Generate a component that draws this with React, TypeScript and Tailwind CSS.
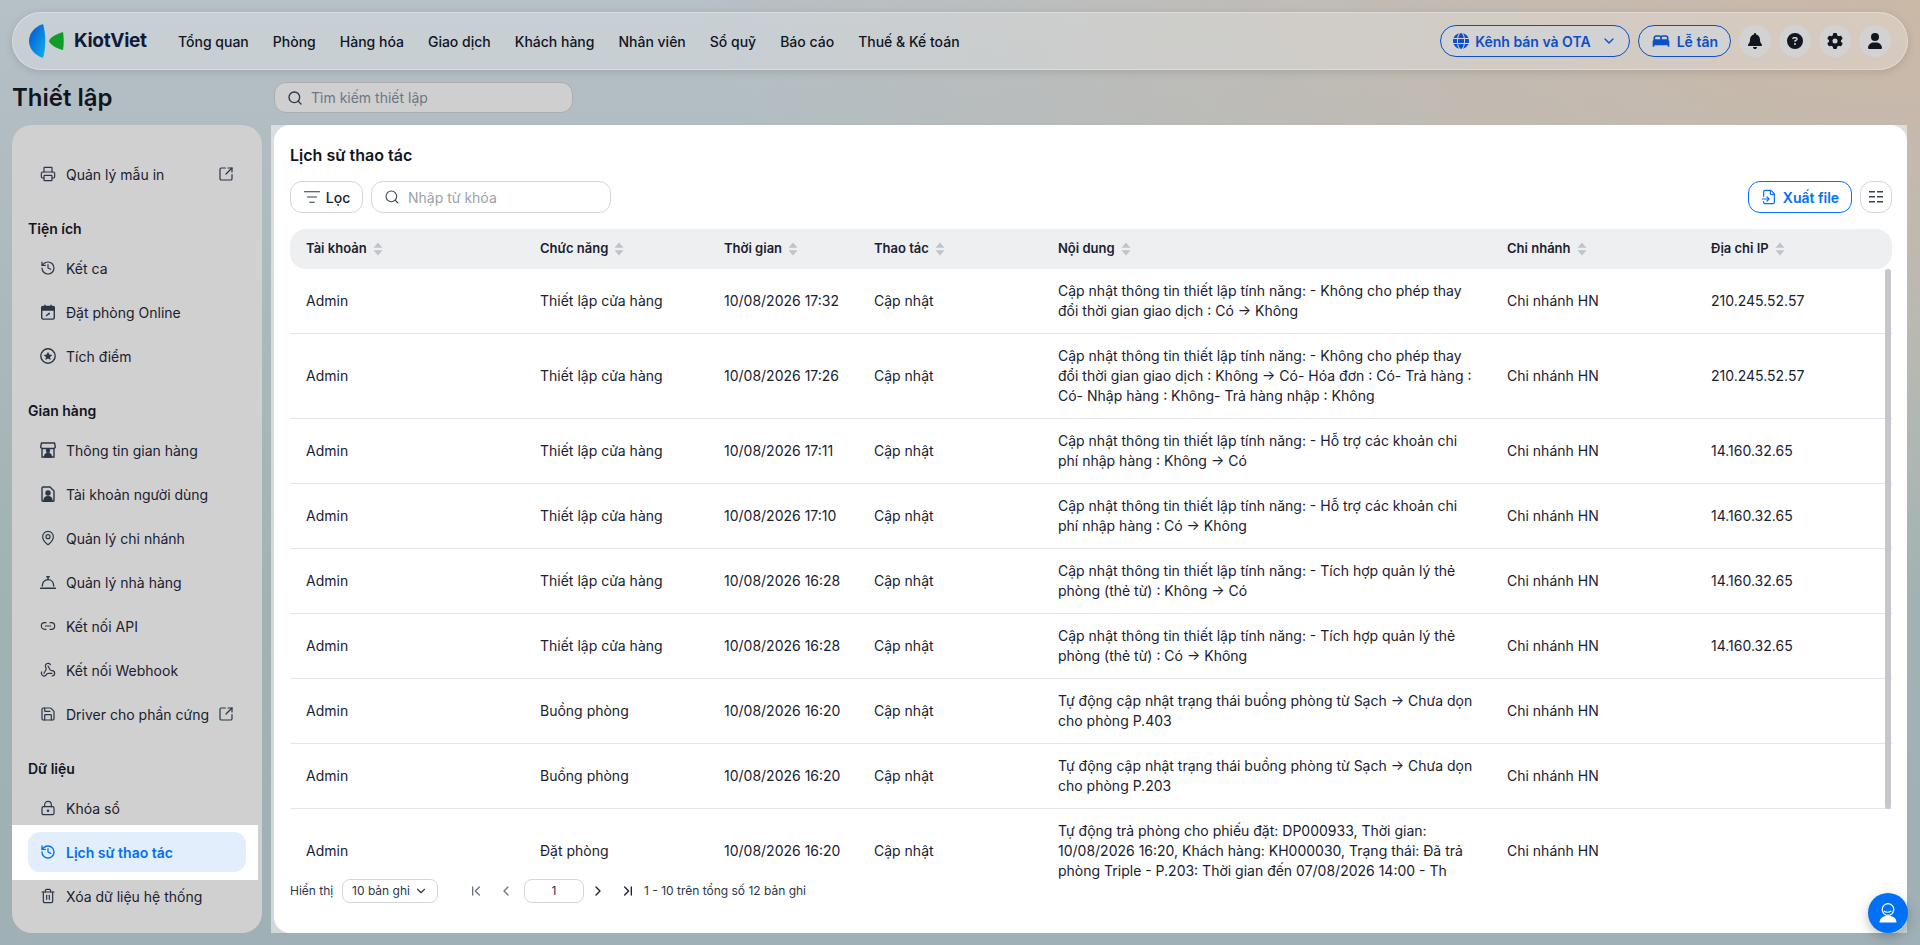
import React from "react";
import { Printer, History, MapPin, Link2, Webhook, Save, LockKeyhole, Trash2, SquareArrowOutUpRight, Search, ListFilter, FileInput, ChevronDown, ChevronFirst, ChevronLast, ChevronLeft, ChevronRight } from "lucide-react";
import { FaBell, FaCircleQuestion, FaUser, FaGear, FaGlobe } from "react-icons/fa6";
import { MdBed } from "react-icons/md";

const Logo = () => (
  <svg width="35" height="34" viewBox="0 0 35 34">
    <defs>
      <linearGradient id="lb" x1="0" y1="0" x2="1" y2="1">
        <stop offset="0" stopColor="#0a4fd0" />
        <stop offset="0.6" stopColor="#0a8be0" />
        <stop offset="1" stopColor="#14b0e8" />
      </linearGradient>
    </defs>
    <path d="M14 0C5 3 0 10 0 17s5 14 14 17C17 25 17 9 14 0Z" fill="url(#lb)" />
    <path d="M34 8c-5 1.500-13 5-14 9 1 4 9 8 14 9 1-6 1-12 0-18Z" fill="#0f9d2a" />
  </svg>
);

const CalIcon = () => (
  <svg width="16" height="16" viewBox="0 0 16 16" fill="none" stroke="#2b3648" strokeWidth="1.4">
    <rect x="1.700" y="2.500" width="12.600" height="12.600" rx="1.500" />
    <path d="M1.700 3.500h12.600V6H1.700z" fill="#2b3648" />
    <path d="M5 .7v2M11 .7v2" />
    <path d="M6 12l3.500-3" />
    <path d="M9.800 8.500v2h-2z" fill="#2b3648" stroke="none" />
  </svg>
);
const StarIcon = () => (
  <svg width="16" height="16" viewBox="0 0 16 16" fill="none">
    <circle cx="8" cy="8" r="7.200" stroke="#2b3648" strokeWidth="1.400" />
    <path d="M8 3.800l1.300 2.800 3 .3-2.250 2 .65 3L8 10.400 5.300 11.900l.65-3-2.250-2 3-.3z" fill="#2b3648" />
  </svg>
);
const StoreIcon = () => (
  <svg width="16" height="16" viewBox="0 0 16 16" fill="none" stroke="#2b3648" strokeWidth="1.400">
    <path d="M1.500 1h13l.8 3.500c0 1.200-1 2-2.200 2H2.900c-1.200 0-2.200-.8-2.200-2z" />
    <path d="M2 6.500V15h12V6.500" />
    <circle cx="8" cy="8.800" r="1.500" fill="#2b3648" />
    <path d="M4.700 15c0-2.500 1.500-3.500 3.300-3.500s3.300 1 3.300 3.500z" fill="#2b3648" />
  </svg>
);
const AccountIcon = () => (
  <svg width="16" height="16" viewBox="0 0 16 16" fill="none" stroke="#2b3648" strokeWidth="1.400">
    <path d="M2 2c0-.6.400-1 1-1h7l4 4v9.500c0 .4-.400.800-1 .800H3c-.6 0-1-.4-1-1z" />
    <circle cx="8" cy="7" r="2" fill="#2b3648" />
    <path d="M4 15c0-3 1.800-4.300 4-4.300s4 1.300 4 4.300z" fill="#2b3648" />
  </svg>
);
const BellDome = () => (
  <svg width="16" height="16" viewBox="0 0 16 16" fill="none" stroke="#2b3648" strokeWidth="1.400" strokeLinecap="round">
    <path d="M2.300 12c0-3.800 2.500-6.400 5.700-6.400s5.700 2.600 5.700 6.400" />
    <path d="M.5 14.200h15M8 5.500V3M6.800 2.800h2.400" />
  </svg>
);

const SortIcon = () => (
  <svg width="10" height="14" viewBox="0 0 10 14" className="ml-1.5 shrink-0" fill="#bfc3ca">
    <path d="M5 .5 9.500 5.700H.5zM5 13.500.5 8.300h9z" />
  </svg>
);

const ColumnsIcon = () => (
  <svg width="16" height="12" viewBox="0 0 16 12" fill="#3a4353">
    <path d="M1 0h6v1.500H1zM9 0h6v1.500H9zM1 5h6v1.500H1zM9 5h6v1.500H9zM1 10h6v1.500H1zM9 10h6v1.500H9z" />
  </svg>
);

const SupportIcon = () => (
  <svg width="24" height="24" viewBox="0 0 24 24" fill="none">
    <circle cx="12" cy="8.500" r="5.800" stroke="#fff" strokeWidth="1.200" />
    <path d="M8 10c1.500 1.500 5 1.800 7.500 0" stroke="#fff" strokeWidth="1.200" />
    <path d="M3.500 21.500c0-4.500 3.500-6.800 8.500-6.800s8.500 2.300 8.500 6.800z" fill="#fff" />
  </svg>
);

const nav = ["Tổng quan", "Phòng", "Hàng hóa", "Giao dịch", "Khách hàng", "Nhân viên", "Sổ quỹ", "Báo cáo", "Thuế & Kế toán"];

const ic = { size: 16, color: "#2b3648", strokeWidth: 1.8 };

type Item = { label: string; icon: React.ReactNode; ext?: boolean; active?: boolean };

const Row = ({ label, icon, ext }: Item) => (
  <div className="flex h-11 items-center pl-7 pr-7">
    <span className="flex w-4 justify-center mr-2.5 shrink-0">{icon}</span>
    <span className="flex-1 whitespace-nowrap text-[14px] text-[#1a2130]">{label}</span>
    {ext && <SquareArrowOutUpRight size={16} color="#2b3648" strokeWidth={1.8} />}
  </div>
);

const Title = ({ children }: { children: React.ReactNode }) => (
  <div className="flex h-5 items-center pl-4 text-[14px] font-semibold text-[#11151f]">{children}</div>
);

const cols = ["Tài khoản", "Chức năng", "Thời gian", "Thao tác", "Nội dung", "Chi nhánh", "Địa chỉ IP"];
const gridCols = "grid grid-cols-[234px_184px_150px_184px_449px_204px_181px]";

const rows = [
  ["Thiết lập cửa hàng", "10/08/2026 17:32", "Cập nhật thông tin thiết lập tính năng: - Không cho phép thay đổi thời gian giao dịch : Có -> Không", "210.245.52.57"],
  ["Thiết lập cửa hàng", "10/08/2026 17:26", "Cập nhật thông tin thiết lập tính năng: - Không cho phép thay đổi thời gian giao dịch : Không -> Có- Hóa đơn : Có- Trả hàng : Có- Nhập hàng : Không- Trả hàng nhập : Không", "210.245.52.57"],
  ["Thiết lập cửa hàng", "10/08/2026 17:11", "Cập nhật thông tin thiết lập tính năng: - Hỗ trợ các khoản chi phí nhập hàng : Không -> Có", "14.160.32.65"],
  ["Thiết lập cửa hàng", "10/08/2026 17:10", "Cập nhật thông tin thiết lập tính năng: - Hỗ trợ các khoản chi phí nhập hàng : Có -> Không", "14.160.32.65"],
  ["Thiết lập cửa hàng", "10/08/2026 16:28", "Cập nhật thông tin thiết lập tính năng: - Tích hợp quản lý thẻ phòng (thẻ từ) : Không -> Có", "14.160.32.65"],
  ["Thiết lập cửa hàng", "10/08/2026 16:28", "Cập nhật thông tin thiết lập tính năng: - Tích hợp quản lý thẻ phòng (thẻ từ) : Có -> Không", "14.160.32.65"],
  ["Buồng phòng", "10/08/2026 16:20", "Tự động cập nhật trạng thái buồng phòng từ Sạch → Chưa dọn cho phòng P.403", ""],
  ["Buồng phòng", "10/08/2026 16:20", "Tự động cập nhật trạng thái buồng phòng từ Sạch → Chưa dọn cho phòng P.203", ""],
  ["Đặt phòng", "10/08/2026 16:20", "Tự động trả phòng cho phiếu đặt: DP000933, Thời gian: 10/08/2026 16:20, Khách hàng: KH000030, Trạng thái: Đã trả phòng Triple - P.203: Thời gian đến 07/08/2026 14:00 - Th", ""],
];

export default function App() {
  return (
    <div className="relative flex h-[945px] w-[1920px] flex-col overflow-hidden bg-[radial-gradient(ellipse_at_100%_0%,#cbb8a6_0%,rgba(203,184,166,0)_45%),linear-gradient(180deg,#b6c0c7_0%,#a0b2b1_65%,#9fb1b6_100%)] px-3 pt-3 font-['Inter','Noto_Sans',sans-serif] text-[#1a2130]">
      <header className="flex h-[58px] shrink-0 items-center rounded-[29px] border border-white/30 bg-white/25 pl-[16px] pr-[16px] shadow-[0_2px_8px_rgba(0,0,0,0.12)]">
        <Logo />
        <span className="ml-[10px] w-[76px] text-[19px] font-bold tracking-[-0.3px] text-[#101a3a]">KiotViet</span>
        <nav className="ml-[28px] flex gap-6">
          {nav.map((n) => (
            <span key={n} className="whitespace-nowrap text-[14px] font-medium text-[#11151f]">{n}</span>
          ))}
        </nav>
        <div className="ml-auto flex items-center gap-2">
          <div className="flex h-8 items-center gap-[6px] rounded-full border border-[#0b50c8] bg-[#d2d2d2] pl-[12px] pr-[12px] text-[14px] font-semibold text-[#0b50c8]">
            <FaGlobe size={16} />
            <span>Kênh bán và OTA</span>
            <ChevronDown size={16} className="ml-1" />
          </div>
          <div className="flex h-8 items-center gap-[6px] rounded-full border border-[#0b50c8] bg-[#d2d2d2] pl-[12px] pr-[12px] text-[14px] font-semibold text-[#0b50c8]">
            <MdBed size={20} />
            <span>Lễ tân</span>
          </div>
          {[<FaBell size={16} />, <FaCircleQuestion size={16} />, <FaGear size={16} />, <FaUser size={16} />].map((i, k) => (
            <span key={k} className="flex h-8 w-8 items-center justify-center rounded-full bg-[#d2d2d2] text-[#11151f]">{i}</span>
          ))}
        </div>
      </header>

      <div className="mt-3 flex h-[31px] shrink-0 items-center">
        <h1 className="w-[262px] text-[24px] font-semibold text-[#11151f]">Thiết lập</h1>
        <div className="flex h-[31px] w-[299px] items-center gap-2 rounded-xl border border-[#a9adb0] bg-[#cfcfcf] px-3 text-[14px] text-[#6d7684]">
          <Search size={16} color="#2b3648" />
          <span>Tìm kiếm thiết lập</span>
        </div>
      </div>

      <div className="mt-[12px] flex h-[808px] shrink-0">
        <aside className="flex h-full w-[250px] shrink-0 flex-col rounded-[20px] bg-[#d0d0d0] pt-[27px]">
          <div className="-mx-0"><Row label="Quản lý mẫu in" icon={<Printer {...ic} />} ext /></div>
          <div className="mt-[22px]"><Title>Tiện ích</Title></div>
          <div className="mt-[8px]">
            <Row label="Kết ca" icon={<History {...ic} />} />
            <Row label="Đặt phòng Online" icon={<CalIcon />} />
            <Row label="Tích điểm" icon={<StarIcon />} />
          </div>
          <div className="mt-[22px]"><Title>Gian hàng</Title></div>
          <div className="mt-[8px]">
            <Row label="Thông tin gian hàng" icon={<StoreIcon />} />
            <Row label="Tài khoản người dùng" icon={<AccountIcon />} />
            <Row label="Quản lý chi nhánh" icon={<MapPin {...ic} />} />
            <Row label="Quản lý nhà hàng" icon={<BellDome />} />
            <Row label="Kết nối API" icon={<Link2 {...ic} />} />
            <Row label="Kết nối Webhook" icon={<Webhook {...ic} />} />
            <Row label="Driver cho phần cứng" icon={<Save {...ic} />} ext />
          </div>
          <div className="mt-[22px]"><Title>Dữ liệu</Title></div>
          <div className="mt-[8px]">
            <Row label="Khóa sổ" icon={<LockKeyhole {...ic} />} />
            <div className="h-[55px] w-[246px] -my-[5.5px] relative flex items-center bg-white pl-4">
              <div className="flex h-10 w-[218px] items-center rounded-xl bg-[#e2eefb] pl-3">
                <History size={16} color="#0070f4" strokeWidth={2} className="mr-2.5" />
                <span className="text-[14px] font-semibold text-[#0070f4]">Lịch sử thao tác</span>
              </div>
            </div>
            <Row label="Xóa dữ liệu hệ thống" icon={<Trash2 {...ic} />} />
          </div>
        </aside>

        <main className="ml-[9px] flex h-full w-[1636px] bg-white/50 pl-[3px]">
          <div className="flex h-full w-full flex-col overflow-hidden rounded-[16px] bg-white pl-4 pr-[15px]">
            <h2 className="mt-[19px] h-[22px] text-[16px] font-semibold leading-[22px] text-[#11151f]">Lịch sử thao tác</h2>
            <div className="mt-[15px] flex h-8 shrink-0 items-center">
              <div className="flex h-8 w-[73px] items-center justify-center gap-[5px] rounded-xl border border-[#d3d6da] text-[14px] font-medium">
                <ListFilter size={18} color="#2b3648" strokeWidth={1.6} />
                Lọc
              </div>
              <div className="ml-2 flex h-8 w-[240px] items-center gap-2 rounded-xl border border-[#d3d6da] px-3 text-[14px] text-[#9aa1ac]">
                <Search size={16} color="#3a4353" strokeWidth={1.6} />
                Nhập từ khóa
              </div>
              <div className="ml-auto flex h-8 w-[104px] items-center justify-center gap-[6px] rounded-xl border border-[#0070f4] text-[14px] font-semibold text-[#0070f4]">
                <FileInput size={16} strokeWidth={1.8} />
                Xuất file
              </div>
              <div className="ml-2 flex h-8 w-8 items-center justify-center rounded-xl border border-[#d3d6da]">
                <ColumnsIcon />
              </div>
            </div>

            <div className={`${gridCols} mt-4 h-10 shrink-0 items-center rounded-2xl bg-[#eeeff1]`}>
              {cols.map((c) => (
                <div key={c} className="flex items-center pl-4 text-[13px] font-semibold text-[#1a2130]">
                  {c}
                  <SortIcon />
                </div>
              ))}
            </div>

            <div className="relative h-[610px] shrink-0 overflow-hidden">
              {rows.map((r, i) => (
                <div key={i} className={`${gridCols} items-center border-b border-[#e4e6e9] py-3 text-[14px] leading-5 text-[#1a2130]`}>
                  <div className="pl-4">Admin</div>
                  <div className="pl-4">{r[0]}</div>
                  <div className="pl-4">{r[1]}</div>
                  <div className="pl-4">Cập nhật</div>
                  <div className="pl-4 pr-4">{r[2]}</div>
                  <div className="pl-4">Chi nhánh HN</div>
                  <div className="pl-4">{r[3]}</div>
                </div>
              ))}
              <div className="absolute right-[1px] top-0 h-[540px] w-[6px] rounded-full bg-[#c4c6cc]" />
            </div>

            <div className="flex h-[24px] shrink-0 items-center text-[12px] text-[#2b3648]">
              <span className="w-[52px]">Hiển thị</span>
              <div className="flex h-6 w-[96px] items-center justify-center gap-1 rounded-lg border border-[#d3d6da]">
                10 bản ghi
                <ChevronDown size={14} />
              </div>
              <ChevronFirst size={16} color="#6b7280" className="ml-[30px]" />
              <ChevronLeft size={16} color="#6b7280" className="ml-[14px]" />
              <div className="ml-[10px] flex h-6 w-[60px] items-center justify-center rounded-lg border border-[#d3d6da]">1</div>
              <ChevronRight size={16} color="#1a2130" className="ml-[6px]" />
              <ChevronLast size={16} color="#1a2130" className="ml-[14px]" />
              <span className="ml-[8px]">1 - 10 trên tổng số 12 bản ghi</span>
            </div>
          </div>
        </main>
      </div>

      <div className="absolute left-[1868px] top-[893px] flex h-10 w-10 items-center justify-center rounded-full bg-[#0070f4] shadow-[0_4px_12px_rgba(0,0,0,0.25)]">
        <SupportIcon />
      </div>
    </div>
  );
}
